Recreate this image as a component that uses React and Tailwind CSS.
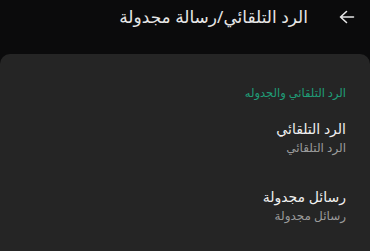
import React from 'react';

const items = [
  { title: 'الرد التلقائي', sub: 'الرد التلقائي' },
  { title: 'رسائل مجدولة', sub: 'رسائل مجدولة' },
];

const App = () => {
  return (
    <div
      dir="rtl"
      className="w-[370px] h-[251px] bg-[#0b0b0c] flex flex-col overflow-hidden"
      style={{ fontFamily: '"Noto Sans", "DejaVu Sans", sans-serif' }}
    >
      <div className="h-[54px] flex items-start pt-[4px] pr-[8px]">
        <button className="w-[30px] h-[26px] flex items-center justify-center text-[#e6e6e6]">
          <svg width="16" height="14" viewBox="0 0 16 14" fill="none" stroke="currentColor" strokeWidth="1.6" strokeLinecap="round" strokeLinejoin="round">
            <path d="M1.5 7h13M1.5 7l6-5.5M1.5 7l6 5.5" />
          </svg>
        </button>
        <h1 className="mr-[24px] text-[17px] leading-[26px] text-[#e6e6e6]">الرد التلقائي/رسالة مجدولة</h1>
      </div>
      <div className="flex-1 bg-[#252525] rounded-t-[10px] pr-[24px] pt-[31px]">
        <div className="text-[11.5px] leading-[16px] text-[#1f9e78]">الرد التلقائي والجدوله</div>
        <div className="mt-[18px] flex flex-col gap-[30px]">
          {items.map((it) => (
            <div key={it.title} className="flex flex-col">
              <div className="text-[14px] leading-[20px] text-[#f0f0f0]">{it.title}</div>
              <div className="text-[12px] leading-[18px] text-[#9b9b9b]">{it.sub}</div>
            </div>
          ))}
        </div>
      </div>
    </div>
  );
};

export default App;
